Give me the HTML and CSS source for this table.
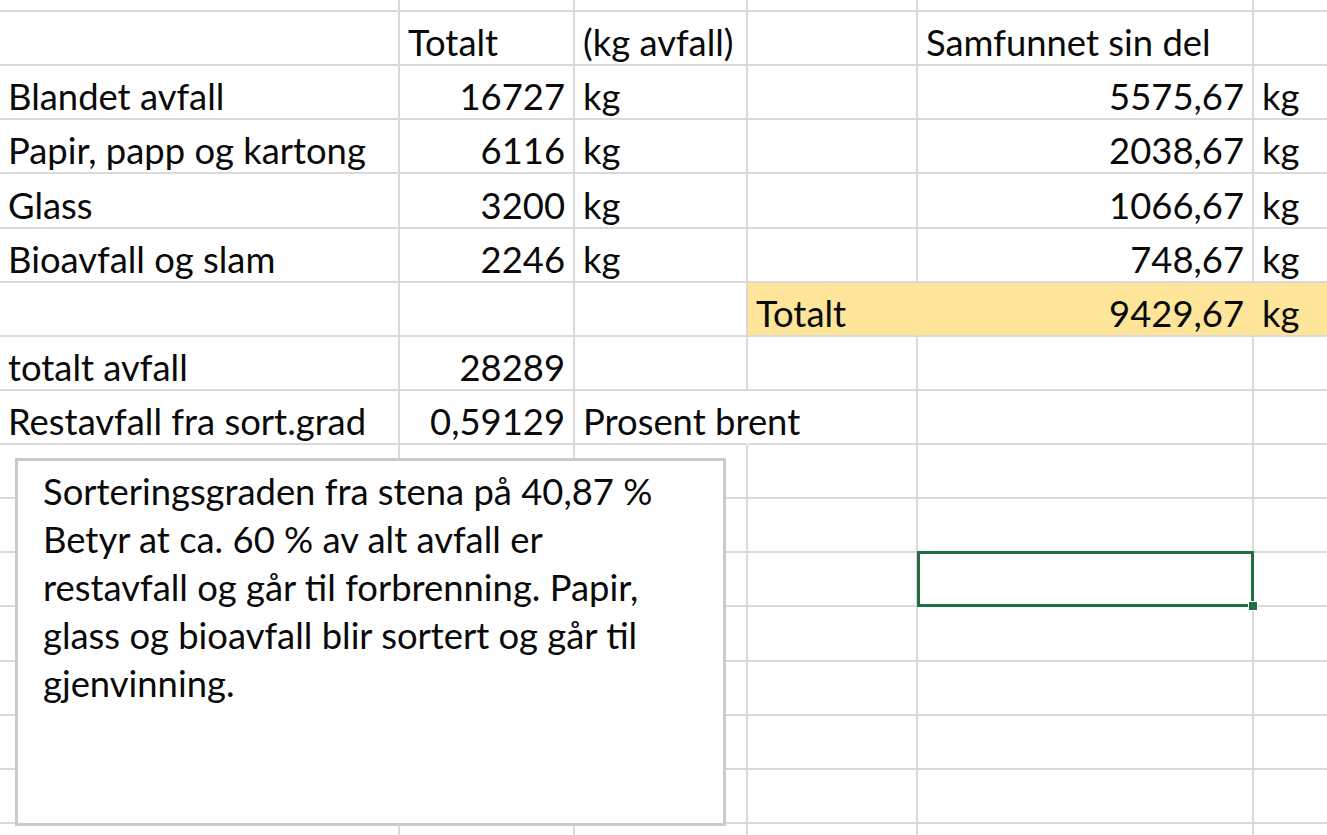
FILE: index.html
```html
<!DOCTYPE html>
<html lang="no">
<head>
<meta charset="utf-8">
<title>Avfall</title>
<link rel="stylesheet" href="styles.css">
</head>
<body>
<div class="sheet">
  <div class="grid">
    <!-- partial top row -->
    <div class="c top"></div><div class="c top"></div><div class="c top"></div><div class="c top"></div><div class="c top"></div><div class="c top"></div>
    <!-- row 1 -->
    <div class="c"></div><div class="c">Totalt</div><div class="c">(kg avfall)</div><div class="c"></div><div class="c">Samfunnet sin del</div><div class="c"></div>
    <!-- data rows -->
    <div class="c">Blandet avfall</div><div class="c num">16727</div><div class="c">kg</div><div class="c"></div><div class="c num">5575,67</div><div class="c">kg</div>
    <div class="c">Papir, papp og kartong</div><div class="c num">6116</div><div class="c">kg</div><div class="c"></div><div class="c num">2038,67</div><div class="c">kg</div>
    <div class="c">Glass</div><div class="c num">3200</div><div class="c">kg</div><div class="c"></div><div class="c num">1066,67</div><div class="c">kg</div>
    <div class="c">Bioavfall og slam</div><div class="c num">2246</div><div class="c">kg</div><div class="c"></div><div class="c num">748,67</div><div class="c">kg</div>
    <div class="c"></div><div class="c"></div><div class="c"></div><div class="c hl">Totalt</div><div class="c hl num">9429,67</div><div class="c hl">kg</div>
    <div class="c">totalt avfall</div><div class="c num">28289</div><div class="c"></div><div class="c"></div><div class="c"></div><div class="c"></div>
    <div class="c">Restavfall fra sort.grad</div><div class="c num">0,59129</div><div class="c spill">Prosent brent</div><div class="c"></div><div class="c"></div><div class="c"></div>
    <div class="c"></div><div class="c"></div><div class="c"></div><div class="c"></div><div class="c"></div><div class="c"></div>
    <div class="c"></div><div class="c"></div><div class="c"></div><div class="c"></div><div class="c"></div><div class="c"></div>
    <div class="c"></div><div class="c"></div><div class="c"></div><div class="c"></div><div class="c sel"></div><div class="c"></div>
    <div class="c"></div><div class="c"></div><div class="c"></div><div class="c"></div><div class="c"></div><div class="c"></div>
    <div class="c"></div><div class="c"></div><div class="c"></div><div class="c"></div><div class="c"></div><div class="c"></div>
    <div class="c"></div><div class="c"></div><div class="c"></div><div class="c"></div><div class="c"></div><div class="c"></div>
    <div class="c"></div><div class="c"></div><div class="c"></div><div class="c"></div><div class="c"></div><div class="c"></div>
    <div class="c"></div><div class="c"></div><div class="c"></div><div class="c"></div><div class="c"></div><div class="c"></div>
  </div>
  <div class="textbox">
    Sorteringsgraden fra stena på 40,87 %<br>
    Betyr at ca. 60 % av alt avfall er<br>
    restavfall og går til forbrenning. Papir,<br>
    glass og bioavfall blir sortert og går til<br>
    gjenvinning.
  </div>
</div>
</body>
</html>
```

FILE: styles.css
```css
html, body {
  margin: 0;
  padding: 0;
  background: #ffffff;
  overflow: hidden;
}

.sheet {
  position: relative;
  width: 1327px;
  height: 835px;
  overflow: hidden;
  font-family: "Lato", "Noto Sans", sans-serif;
  color: #0a0a0a;
}

.grid {
  display: grid;
  grid-template-columns: 400px 175px 173px 170px 336px 80px;
  grid-template-rows: 12px repeat(16, 54.13px);
}

.c {
  box-sizing: border-box;
  border-right: 2px solid #dadada;
  border-bottom: 2px solid #dadada;
  padding: 0 8px 2px 8px;
  display: flex;
  align-items: flex-end;
  font-size: 36.4px;
  line-height: 40px;
  white-space: nowrap;
  overflow: visible;
}

.c.top {
  padding: 0;
}

.c.num {
  justify-content: flex-end;
}

.c.spill {
  border-right-color: transparent;
}

.c.hl {
  background: #fee599;
  border-right-color: #fee599;
}

.c.sel {
  position: relative;
}

.c.sel::before {
  content: "";
  position: absolute;
  left: -1px;
  top: -2px;
  right: -2px;
  bottom: -2px;
  border: 3px solid #1f6f43;
}

.c.sel::after {
  content: "";
  position: absolute;
  right: -6px;
  bottom: -6px;
  width: 8px;
  height: 8px;
  background: #1f6f43;
  border: 1px solid #ffffff;
}

.textbox {
  position: absolute;
  left: 15px;
  top: 458px;
  width: 711px;
  height: 368px;
  box-sizing: border-box;
  border: 3px solid #cbcbcb;
  background: #ffffff;
  padding: 6px 10px 0 25px;
  font-size: 36.4px;
  line-height: 48px;
  color: #0a0a0a;
  white-space: nowrap;
}
```
